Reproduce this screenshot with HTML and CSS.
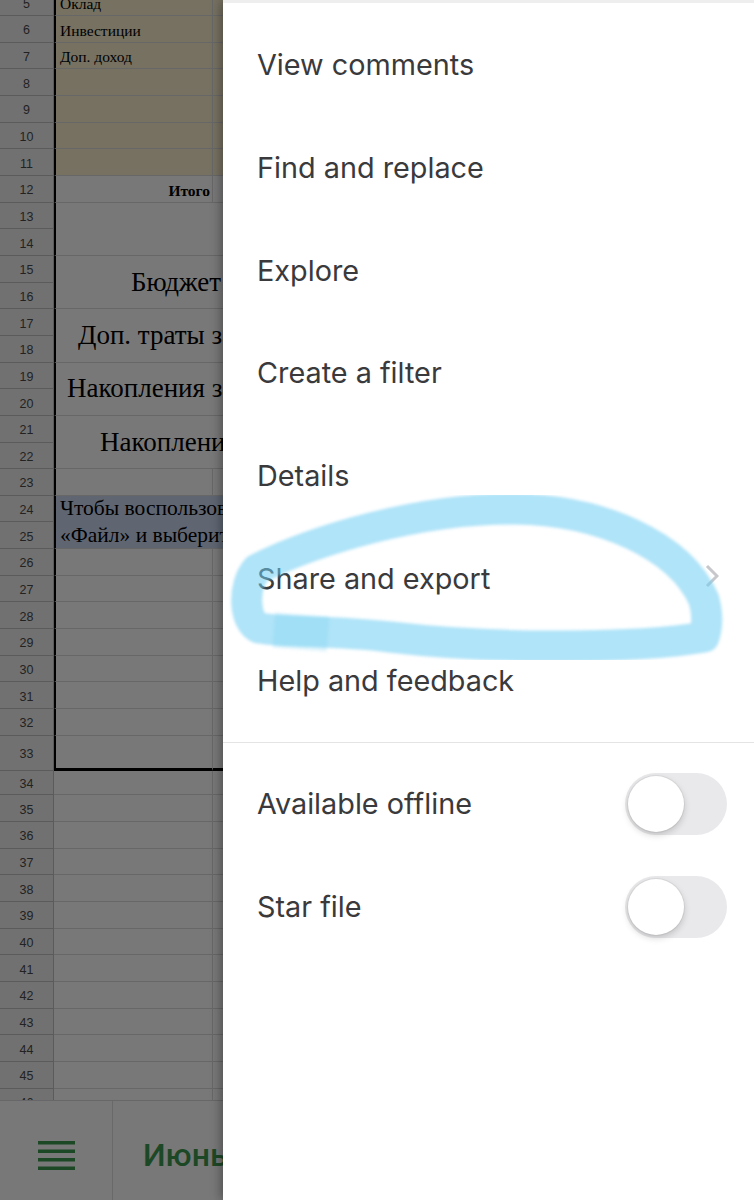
FILE: index.html
```html
<!DOCTYPE html>
<html lang="ru">
<head>
  <meta charset="UTF-8">
  <meta name="viewport" content="width=device-width, initial-scale=1.0">
  <title>Бюджет</title>
  <link rel="stylesheet" href="styles.css">
</head>
<body>
  <div class="app">
    <div class="sheet">
      <div class="grid">
        <div class="rh">5</div><div class="c a y">Оклад</div><div class="c y"></div>
        <div class="rh">6</div><div class="c a y">Инвестиции</div><div class="c y"></div>
        <div class="rh">7</div><div class="c a y">Доп. доход</div><div class="c y"></div>
        <div class="rh">8</div><div class="c a y"></div><div class="c y"></div>
        <div class="rh">9</div><div class="c a y"></div><div class="c y"></div>
        <div class="rh">10</div><div class="c a y"></div><div class="c y"></div>
        <div class="rh">11</div><div class="c a y"></div><div class="c y"></div>
        <div class="rh">12</div><div class="c a total">Итого</div><div class="c"></div>

        <div class="rh">13</div><div class="c a merge"></div>
        <div class="rh">14</div>
        <div class="rh">15</div><div class="c a merge m1">Бюджет на месяц</div>
        <div class="rh">16</div>
        <div class="rh">17</div><div class="c a merge m2">Доп. траты за месяц</div>
        <div class="rh">18</div>
        <div class="rh">19</div><div class="c a merge m3">Накопления за месяц</div>
        <div class="rh">20</div>
        <div class="rh">21</div><div class="c a merge m4">Накопления всего</div>
        <div class="rh">22</div>
        <div class="rh">23</div><div class="c a"></div><div class="c"></div>
        <div class="rh">24</div><div class="c a merge note">Чтобы воспользоваться шаблоном, откройте меню<br>«Файл» и выберите «Создать копию»</div>
        <div class="rh">25</div>

        <div class="rh">26</div><div class="c a"></div><div class="c"></div>
        <div class="rh">27</div><div class="c a"></div><div class="c"></div>
        <div class="rh">28</div><div class="c a"></div><div class="c"></div>
        <div class="rh">29</div><div class="c a"></div><div class="c"></div>
        <div class="rh">30</div><div class="c a"></div><div class="c"></div>
        <div class="rh">31</div><div class="c a"></div><div class="c"></div>
        <div class="rh">32</div><div class="c a"></div><div class="c"></div>
        <div class="rh">33</div><div class="c a end"></div><div class="c end"></div>
        <div class="rh">34</div><div class="c"></div><div class="c"></div>
        <div class="rh">35</div><div class="c"></div><div class="c"></div>
        <div class="rh">36</div><div class="c"></div><div class="c"></div>
        <div class="rh">37</div><div class="c"></div><div class="c"></div>
        <div class="rh">38</div><div class="c"></div><div class="c"></div>
        <div class="rh">39</div><div class="c"></div><div class="c"></div>
        <div class="rh">40</div><div class="c"></div><div class="c"></div>
        <div class="rh">41</div><div class="c"></div><div class="c"></div>
        <div class="rh">42</div><div class="c"></div><div class="c"></div>
        <div class="rh">43</div><div class="c"></div><div class="c"></div>
        <div class="rh">44</div><div class="c"></div><div class="c"></div>
        <div class="rh">45</div><div class="c"></div><div class="c"></div>
        <div class="rh">46</div><div class="c"></div><div class="c"></div>
      </div>
    </div>

    <div class="tabs">
      <div class="menu-btn">
        <svg width="37" height="29" viewBox="0 0 37 29">
          <rect x="0" y="0" width="37" height="3.5"/>
          <rect x="0" y="8.5" width="37" height="3.5"/>
          <rect x="0" y="17" width="37" height="3.5"/>
          <rect x="0" y="25.5" width="37" height="3.5"/>
        </svg>
      </div>
      <div class="tab">Июнь</div>
    </div>

    <!-- затемнение и боковое меню -->
    <div class="scrim"></div>
    <div class="drawer">
      <div class="group">
        <div class="item">View comments</div>
        <div class="item">Find and replace</div>
        <div class="item">Explore</div>
        <div class="item">Create a filter</div>
        <div class="item">Details</div>
        <div class="item">Share and export
          <svg class="chevron" width="14" height="24" viewBox="0 0 14 24">
            <path d="M2 2 L12 12 L2 22"/>
          </svg>
        </div>
        <div class="item">Help and feedback</div>
      </div>
      <div class="group last">
        <div class="item">Available offline <span class="switch"><span class="knob"></span></span></div>
        <div class="item">Star file <span class="switch"><span class="knob"></span></span></div>
      </div>
    </div>

    <svg class="scribble" viewBox="0 0 754 1200">
      <defs>
        <filter id="soft"><feGaussianBlur stdDeviation="1.8"/></filter>
      </defs>
      <g fill="none" stroke="#6ecdf3" stroke-linejoin="round" filter="url(#soft)">
        <path stroke-opacity="0.55" stroke-linecap="round" stroke-width="31" d="M704 600 C708 615, 707 628, 704 637 C640 648, 500 650, 390 637 C330 630, 288 633, 259 628 C244 622, 242 586, 257 569 C315 540, 420 508, 515 509 C600 510, 680 545, 704 600"/>
        <path stroke-opacity="0.22" stroke-linecap="butt" stroke-width="35" d="M274 630 L328 634"/>
      </g>
    </svg>
  </div>
</body>
</html>
```

FILE: styles.css
```css
* {
  box-sizing: border-box;
}
body {
  margin: 0;
  font-family: "Liberation Sans", Arial, sans-serif;
  background: #fff;
}
.app {
  position: relative;
  width: 754px;
  height: 1200px;
  overflow: hidden;
}

/* таблица */
.sheet {
  height: 1100px;
  overflow: hidden;
}
.grid {
  display: grid;
  grid-template-columns: 54px 159px 60px;
  grid-template-rows: repeat(28, 26.67px) 35px 24.7px repeat(12, 26.67px);
  margin-top: -10.67px;
  font-family: "Liberation Serif", "Times New Roman", serif;
  color: #000;
}
.rh {
  background: #f1f1f1;
  border-bottom: 1px solid #c2c2c2;
  border-right: 1px solid #c2c2c2;
  display: flex;
  align-items: center;
  justify-content: center;
  padding-top: 3px;
  font-family: "Liberation Sans", Arial, sans-serif;
  font-size: 12.5px;
  color: #4a4a4a;
}
.c {
  border-right: 1px solid #dcdcdc;
  border-bottom: 1px solid #dcdcdc;
  display: flex;
  align-items: flex-end;
  padding: 0 4px 2px;
  font-size: 15.5px;
  white-space: nowrap;
  overflow: hidden;
}
.a {
  border-left: 2px solid #000;
}
.y {
  background: #fbf0cf;
}
.total {
  justify-content: flex-end;
  padding-right: 2px;
  font-weight: bold;
  font-size: 15.5px;
}
.merge {
  grid-column: 2 / 4;
  grid-row: span 2;
  align-items: center;
  padding-bottom: 0;
  font-size: 27px;
}
.m1 { padding-left: 75px; }
.m2 { padding-left: 22px; }
.m3 { padding-left: 11px; }
.m4 { padding-left: 44px; }
.note {
  background: #cbd8f2;
  font-size: 21.5px;
  line-height: 27px;
}
.end {
  border-bottom: 3px solid #000;
}

/* нижняя панель листов */
.tabs {
  height: 100px;
  display: flex;
  border-top: 1px solid #dadce0;
  background: #fff;
}
.menu-btn {
  width: 113px;
  border-right: 1px solid #e0e0e0;
  display: flex;
  align-items: center;
  justify-content: center;
  padding-top: 10px;
}
.menu-btn svg {
  fill: #3f9a52;
}
.tab {
  display: flex;
  align-items: center;
  padding: 8px 0 0 30px;
  font-family: Roboto, sans-serif;
  font-size: 32px;
  font-weight: 500;
  color: #3f9a52;
}

/* меню */
.scrim {
  position: absolute;
  inset: 0;
  background: rgba(0, 0, 0, 0.53);
}
.drawer {
  position: absolute;
  top: 0;
  bottom: 0;
  left: 223px;
  right: 0;
  background: #fff;
  border-top: 3px solid #eeeeee;
  box-shadow: -2px 0 10px rgba(0, 0, 0, 0.35);
  font-family: Inter, "Liberation Sans", sans-serif;
  color: #3a3a3c;
}
.group {
  padding: 10.67px 0 9.7px;
  border-bottom: 1px solid #e4e4e4;
}
.group.last {
  padding-top: 9.67px;
  border-bottom: none;
}
.item {
  height: 102.67px;
  display: flex;
  align-items: center;
  justify-content: space-between;
  padding: 0 27px 0 34px;
  font-size: 28.8px;
}
.chevron {
  margin: 0 8px 5px 0;
}
.chevron path {
  fill: none;
  stroke: #c7c7cc;
  stroke-width: 3;
}
.switch {
  width: 102px;
  height: 62px;
  border-radius: 31px;
  background: #e9e9eb;
  padding: 3px;
  display: flex;
}
.knob {
  width: 56px;
  height: 56px;
  border-radius: 50%;
  background: #fff;
  box-shadow: 0 3px 7px rgba(0, 0, 0, 0.18), 0 0 0 1px rgba(0, 0, 0, 0.05);
}

.scribble {
  position: absolute;
  top: 0;
  left: 0;
  width: 754px;
  height: 1200px;
  pointer-events: none;
}
```
